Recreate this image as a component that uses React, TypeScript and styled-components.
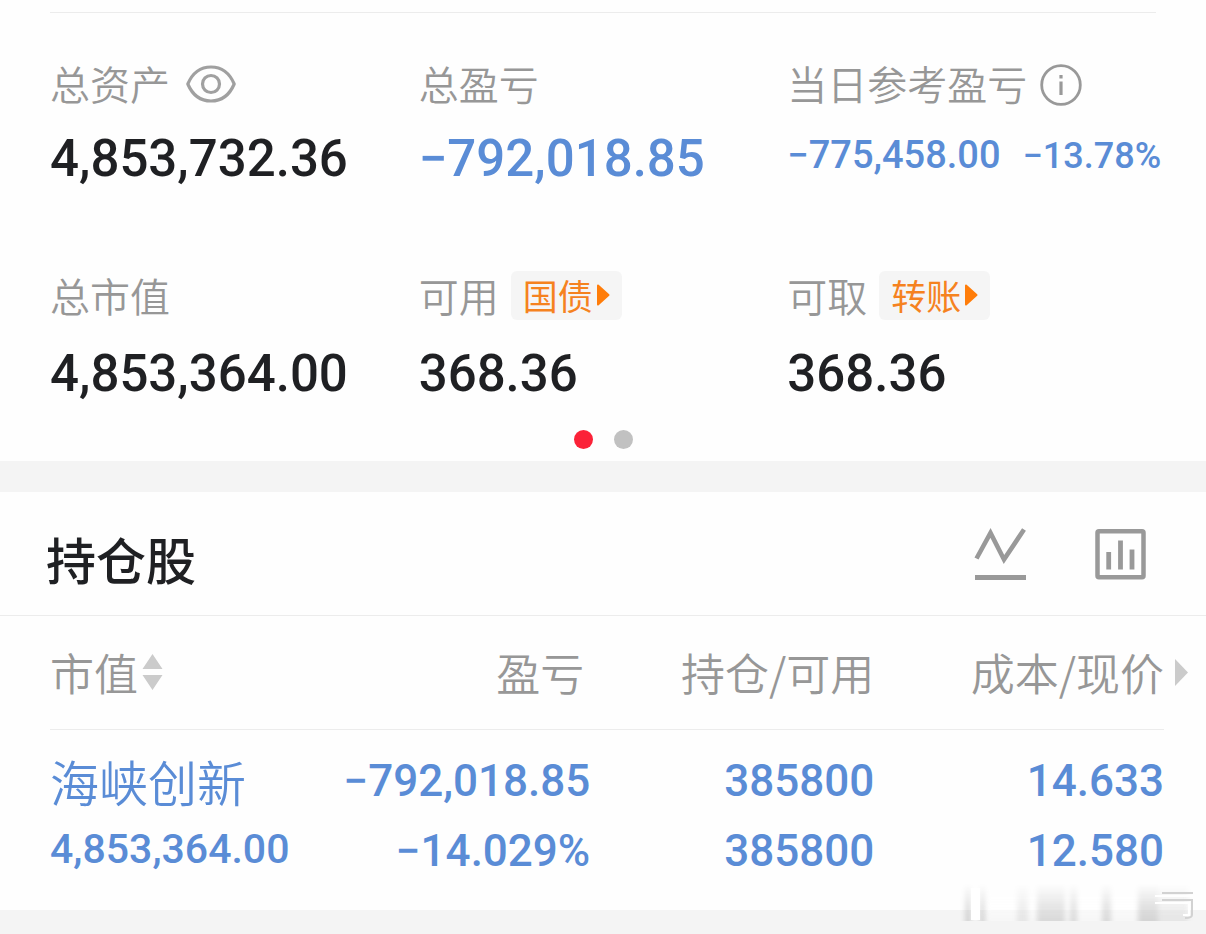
import React from 'react';
import styled, { createGlobalStyle } from 'styled-components';

const cjk = `'Noto Sans CJK SC', sans-serif`;
const digits = `Roboto, 'Noto Sans CJK SC', sans-serif`;

const color = {
  ink: '#1f2023',
  muted: '#979797',
  blue: '#5a8cd6',
  orange: '#f5821f',
  line: '#ececec',
  band: '#f4f4f4',
  page: '#fefefe',
  faint: '#cbcbcb',
};

const GlobalStyle = createGlobalStyle`
  * { box-sizing: border-box; }
  body { margin: 0; background: ${color.band}; font-family: ${cjk}; }
  button { border: 0; padding: 0; background: none; color: inherit; font: inherit; cursor: pointer; }
  svg { display: block; flex: none; }
`;

const Page = styled.main`
  position: relative;
  min-height: 100vh;
  overflow: hidden;
  background: ${color.band};
`;

const Summary = styled.section`
  padding: 12px 50px;
  background: ${color.page};
`;

const Divider = styled.hr`
  height: 1px;
  margin: 0;
  border: 0;
  background: ${color.line};
`;

const StatRow = styled.div<{ $top: number; $gap: number }>`
  display: grid;
  grid-template-columns: repeat(3, minmax(0, 1fr));
  padding-top: ${p => p.$top}px;

  & > div {
    display: flex;
    flex-direction: column;
    gap: ${p => p.$gap}px;
  }
`;

const Stat = styled.div``;

const StatLabel = styled.div<{ $gap?: number }>`
  display: flex;
  align-items: center;
  gap: ${p => p.$gap ?? 12}px;
  height: 56px;
  color: ${color.muted};
  font-size: 40px;
  font-weight: 350;
  line-height: 56px;
  white-space: nowrap;
`;

const StatValue = styled.div<{ $blue?: boolean }>`
  color: ${p => (p.$blue ? color.blue : color.ink)};
  font-family: ${digits};
  font-size: 51px;
  font-weight: 500;
  line-height: 60px;
  white-space: nowrap;
`;

const DayValue = styled.div`
  display: flex;
  align-items: baseline;
  gap: 22px;
  color: ${color.blue};
  font-family: ${digits};
  font-size: 38px;
  font-weight: 500;
  line-height: 52px;
  white-space: nowrap;
`;

const DayPercent = styled.span`
  font-size: 36px;
`;

const IconButton = styled.button`
  display: flex;
`;

const Tag = styled.button`
  display: flex;
  align-items: center;
  gap: 3px;
  height: 49px;
  padding: 0 12px;
  border-radius: 6px;
  background: #f5f5f5;
  color: ${color.orange};
  font-size: 35px;
  font-weight: 400;
  line-height: 48px;
`;

const Pager = styled.div`
  display: flex;
  justify-content: center;
  gap: 21px;
  padding-top: 26px;
`;

const Dot = styled.button<{ $active?: boolean }>`
  width: 19px;
  height: 19px;
  border-radius: 50%;
  background: ${p => (p.$active ? '#fb2238' : '#c1c1c1')};
`;

const Holdings = styled.section`
  margin-top: 31px;
  padding-bottom: 24px;
  background: ${color.page};
`;

const HoldingsHeader = styled.header`
  display: flex;
  align-items: center;
  justify-content: space-between;
  height: 124px;
  padding: 0 60px 0 46px;
  border-bottom: 1px solid ${color.line};
`;

const Title = styled.h2`
  margin: 0;
  padding-top: 8px;
  color: ${color.ink};
  font-size: 50px;
  font-weight: 500;
  line-height: 72px;
`;

const Tools = styled.div`
  display: flex;
  gap: 69px;
`;

const TableWrap = styled.div`
  padding: 0 42px 0 50px;
`;

const Table = styled.table`
  width: 100%;
  border-collapse: collapse;
  table-layout: fixed;
`;

const Col = styled.col<{ $share: number }>`
  width: ${p => p.$share}%;
`;

const HeadCell = styled.th<{ $left?: boolean; $inset?: number }>`
  position: relative;
  height: 113px;
  padding: 0 ${p => p.$inset ?? 0}px 0 0;
  border-bottom: 1px solid ${color.line};
  color: ${color.muted};
  font-size: 44px;
  font-weight: 350;
  line-height: 64px;
  text-align: ${p => (p.$left ? 'left' : 'right')};
  white-space: nowrap;
`;

const SortButton = styled.button`
  display: flex;
  align-items: center;
  gap: 4px;
`;

const MoreButton = styled.button`
  position: absolute;
  top: 43px;
  left: calc(100% + 11px);
`;

const Cell = styled.td<{ $left?: boolean }>`
  padding: 16px 0 0;
  color: ${color.blue};
  font-family: ${digits};
  font-size: 44px;
  font-weight: 500;
  text-align: ${p => (p.$left ? 'left' : 'right')};
  white-space: nowrap;
`;

const Line = styled.div`
  height: 70px;
  line-height: 70px;
`;

const StockName = styled(Line)`
  font-family: ${cjk};
  font-size: 49px;
  font-weight: 350;
`;

const StockValue = styled(Line)`
  font-size: 41px;
  line-height: 66px;
`;

const Watermark = styled.svg`
  position: absolute;
  top: 880px;
  right: 0;
  pointer-events: none;
`;

const EyeIcon = () => (
  <svg width="50" height="40" viewBox="0 0 50 40" fill="none" stroke="#a0a0a0" strokeWidth="3.2">
    <path d="M1.800 21C6.500 10 15 4 25 4s18.500 6 23.200 17C43.500 32 35 38 25 38S6.500 32 1.800 21Z" strokeLinejoin="round" />
    <circle cx="25" cy="21" r="8.500" />
  </svg>
);

const InfoIcon = () => (
  <svg width="44" height="46" viewBox="0 0 44 46" fill="none" stroke="#999">
    <circle cx="22" cy="25" r="19.300" strokeWidth="2.800" />
    <path d="M22 21.500V35M22 15V18.500" strokeWidth="3.200" />
  </svg>
);

const TagArrow = () => (
  <svg width="14" height="22" viewBox="0 0 14 22">
    <path d="M2 1.500 12.500 11 2 20.500Z" fill="#ff7d0a" stroke="#ff7d0a" strokeWidth="2" strokeLinejoin="round" />
  </svg>
);

const TrendIcon = () => (
  <svg width="52" height="52" viewBox="0 0 52 52" fill="none" stroke="#999">
    <path d="M2.500 30.500 16.500 5 30 31.500 50 1.500" strokeWidth="4.600" />
    <path d="M1 49.500H52" strokeWidth="5" />
  </svg>
);

const BarsIcon = () => (
  <svg width="51" height="52" viewBox="0 0 51 52" fill="none" stroke="#999">
    <rect x="2.500" y="3.200" width="46" height="46" rx="1.500" strokeWidth="4.500" />
    <path d="M13.700 24V41.500M25.500 12.500V41.500M37 21.500V41.500" strokeWidth="4.800" />
  </svg>
);

const SortIcon = () => (
  <svg width="21" height="36" viewBox="0 0 21 36" fill={color.faint}>
    <path d="M10.500 0 20.500 15H.5ZM.5 21H20.500L10.500 36Z" />
  </svg>
);

const MoreIcon = () => (
  <svg width="13" height="27" viewBox="0 0 13 27" fill={color.faint}>
    <path d="M0 0 13 13.500 0 27Z" />
  </svg>
);

const smears = [
  { x: 25, w: 6, o: 0.14 },
  { x: 40, w: 5, o: 0.14 },
  { x: 77, w: 11, o: 0.07 },
  { x: 97, w: 28, o: 0.12 },
  { x: 130, w: 7, o: 0.12 },
  { x: 162, w: 9, o: 0.12 },
  { x: 198, w: 20, o: 0.14 },
  { x: 218, w: 30, o: 0.07 },
];

const WatermarkArt = () => (
  <Watermark width="266" height="54" viewBox="0 0 266 54" aria-hidden="true">
    <defs>
      <linearGradient id="fade" x1="0" y1="0" x2="0" y2="1">
        <stop offset="0" stopColor="#000" stopOpacity="0" />
        <stop offset="0.6" stopColor="#000" stopOpacity="0.8" />
        <stop offset="1" stopColor="#000" />
      </linearGradient>
      <linearGradient id="glow" x1="0" y1="0" x2="0" y2="1">
        <stop offset="0" stopColor="#fff" stopOpacity="0" />
        <stop offset="0.5" stopColor="#fff" />
        <stop offset="1" stopColor="#fff" stopOpacity="0.4" />
      </linearGradient>
      <filter id="soft" x="-20%" y="-20%" width="140%" height="140%">
        <feGaussianBlur stdDeviation="2.500 0.500" />
      </filter>
    </defs>
    <rect x="45" y="8" width="204" height="33" fill="url(#glow)" opacity="0.6" filter="url(#soft)" />
    <g filter="url(#soft)">
      {smears.map(s => (
        <rect key={s.x} x={s.x} y="4" width={s.w} height="37" fill="url(#fade)" opacity={s.o} />
      ))}
    </g>
    <rect x="31" y="8" width="9" height="32" fill="#fff" />
    <g fill="none">
      <path d="M222 13H253M222 20H252V35Q252 38 245 38" stroke="#d2d2d2" strokeWidth="2" />
      <path d="M215 16H253M215 23H249V35H243" stroke="#fff" strokeWidth="2" />
    </g>
  </Watermark>
);

export default function App() {
  return (
    <>
      <GlobalStyle />
      <Page>
        <Summary>
          <Divider />
          <StatRow $top={42} $gap={18}>
            <Stat>
              <StatLabel $gap={16}>
                总资产
                <IconButton aria-label="隐藏金额"><EyeIcon /></IconButton>
              </StatLabel>
              <StatValue>4,853,732.36</StatValue>
            </Stat>
            <Stat>
              <StatLabel>总盈亏</StatLabel>
              <StatValue $blue>−792,018.85</StatValue>
            </Stat>
            <Stat>
              <StatLabel>
                当日参考盈亏
                <IconButton aria-label="说明"><InfoIcon /></IconButton>
              </StatLabel>
              <DayValue>
                <span>−775,458.00</span>
                <DayPercent>−13.78%</DayPercent>
              </DayValue>
            </Stat>
          </StatRow>
          <StatRow $top={78} $gap={21}>
            <Stat>
              <StatLabel>总市值</StatLabel>
              <StatValue>4,853,364.00</StatValue>
            </Stat>
            <Stat>
              <StatLabel>
                可用
                <Tag>国债<TagArrow /></Tag>
              </StatLabel>
              <StatValue>368.36</StatValue>
            </Stat>
            <Stat>
              <StatLabel>
                可取
                <Tag>转账<TagArrow /></Tag>
              </StatLabel>
              <StatValue>368.36</StatValue>
            </Stat>
          </StatRow>
          <Pager>
            <Dot $active aria-label="第1页" />
            <Dot aria-label="第2页" />
          </Pager>
        </Summary>

        <Holdings>
          <HoldingsHeader>
            <Title>持仓股</Title>
            <Tools>
              <IconButton aria-label="走势"><TrendIcon /></IconButton>
              <IconButton aria-label="图表"><BarsIcon /></IconButton>
            </Tools>
          </HoldingsHeader>
          <TableWrap>
            <Table>
              <colgroup>
                <Col $share={22} />
                <Col $share={26.5} />
                <Col $share={25.5} />
                <Col $share={26} />
              </colgroup>
              <thead>
                <tr>
                  <HeadCell $left scope="col">
                    <SortButton>市值<SortIcon /></SortButton>
                  </HeadCell>
                  <HeadCell scope="col" $inset={6}>盈亏</HeadCell>
                  <HeadCell scope="col">持仓/可用</HeadCell>
                  <HeadCell scope="col">
                    成本/现价
                    <MoreButton aria-label="更多列"><MoreIcon /></MoreButton>
                  </HeadCell>
                </tr>
              </thead>
              <tbody>
                <tr>
                  <Cell $left>
                    <StockName>海峡创新</StockName>
                    <StockValue>4,853,364.00</StockValue>
                  </Cell>
                  <Cell>
                    <Line>−792,018.85</Line>
                    <Line>−14.029%</Line>
                  </Cell>
                  <Cell>
                    <Line>385800</Line>
                    <Line>385800</Line>
                  </Cell>
                  <Cell>
                    <Line>14.633</Line>
                    <Line>12.580</Line>
                  </Cell>
                </tr>
              </tbody>
            </Table>
          </TableWrap>
        </Holdings>
        <WatermarkArt />
      </Page>
    </>
  );
}
